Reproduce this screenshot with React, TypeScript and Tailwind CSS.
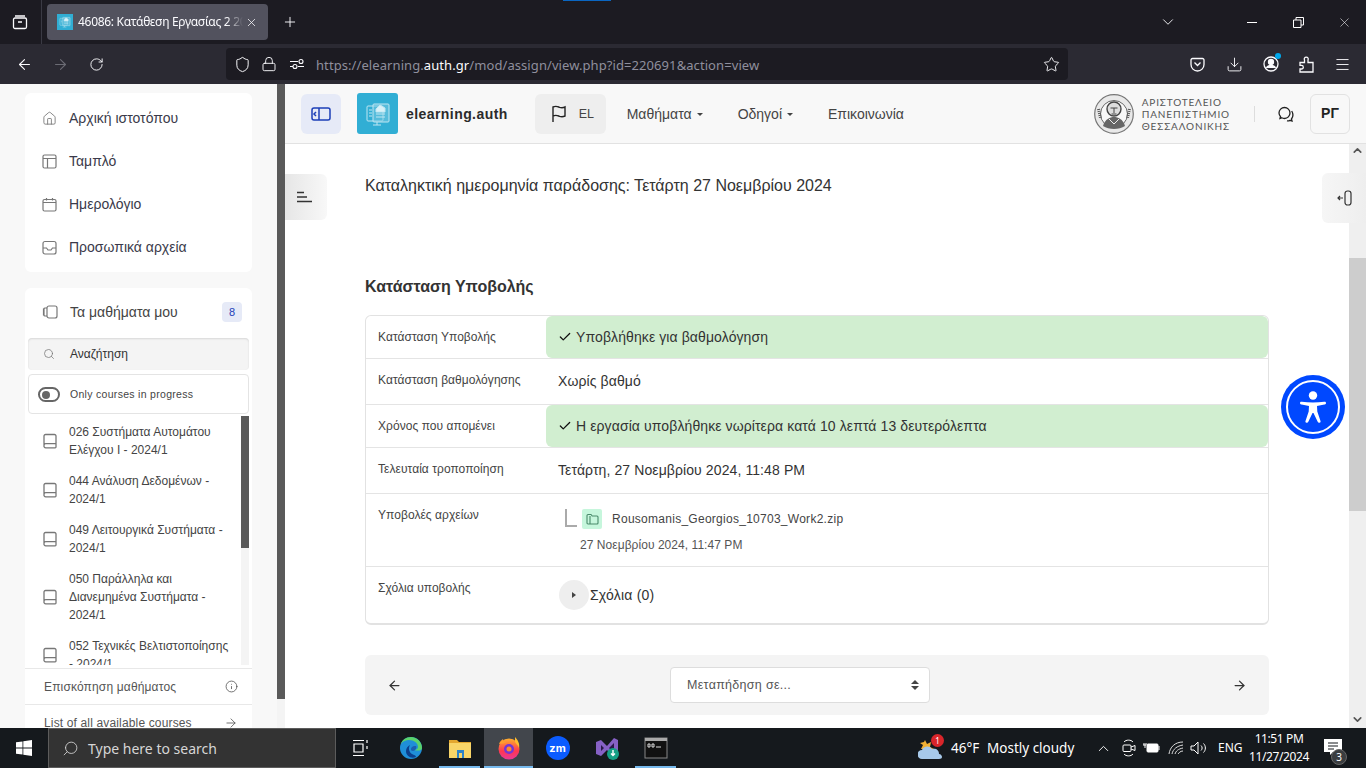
import React from "react";
import {
  ArrowLeft, ArrowRight, Check, ChevronDown, ChevronUp, Download, House, Info, Lock, Menu, Plus, RotateCw, Search, Shield, Star, X,
} from "lucide-react";

const sans = "font-['Liberation_Sans',Arial,sans-serif]";
const ui = "font-['Noto_Sans','Open_Sans',sans-serif]";

function LogoGlyph({ size = 26 }: { size?: number }) {
  return (
    <svg width={size} height={size} viewBox="0 0 26 26" fill="none" stroke="#bfe6f2" strokeWidth="1">
      <rect x="2" y="5" width="16" height="15" rx="1" />
      <rect x="8" y="3" width="16" height="18" rx="1" fill="#7cc9e2" fillOpacity=".5" />
      <path d="M11 8l4-4 5 3v4h-9z" fill="#d8f1f8" />
      <path d="M11 13h9M11 16h9M4 9h3M4 12h3M4 15h3M12 21v3M8 24h8" />
    </svg>
  );
}

function SidebarRow({ icon, label }: { icon: React.ReactNode; label: string }) {
  return (
    <div className="flex h-[43px] items-center pl-[17px] text-[14px] text-[#3a3a4a]">
      <span className="flex w-[27px] justify-start text-[#777]">{icon}</span>
      {label}
    </div>
  );
}

function BookIcon() {
  return (
    <svg width="16" height="16" viewBox="0 0 16 16" fill="none" stroke="#777" strokeWidth="1.3" className="shrink-0">
      <path d="M2 12.5V3a1.5 1.5 0 0 1 1.5-1.5h9A1.5 1.5 0 0 1 14 3v11a.8.8 0 0 1-.8.8H3.8A1.8 1.8 0 0 1 2 12.5a1.8 1.8 0 0 1 1.8-1.8H14" />
    </svg>
  );
}

function Course({ lines }: { lines: string[] }) {
  return (
    <div className="flex items-center py-[6.5px] pl-[14px]">
      <span className="w-[27px]"><BookIcon /></span>
      <div className="text-[12px] leading-[18px] text-[#444] whitespace-nowrap">
        {lines.map((l) => <div key={l}>{l}</div>)}
      </div>
    </div>
  );
}

function Sidebar() {
  return (
    <div className={`relative flex h-full w-[285px] shrink-0 bg-[#f8f8f8] ${sans}`}>
      <div className="w-[277px] pl-[25px] pt-[9px]">
        <div className="w-[227px] rounded-[6px] bg-white pt-[4px] pb-[3px]">
          <SidebarRow label="Αρχική ιστοτόπου" icon={<House size={15} strokeWidth={1.4} />} />
          <SidebarRow label="Ταμπλό" icon={
            <svg width="15" height="15" viewBox="0 0 15 15" fill="none" stroke="#777" strokeWidth="1.2"><rect x="1" y="1" width="13" height="13" rx="1.5" /><path d="M1 4.5h13M5.5 4.5V14" /></svg>
          } />
          <SidebarRow label="Ημερολόγιο" icon={
            <svg width="15" height="15" viewBox="0 0 15 15" fill="none" stroke="#777" strokeWidth="1.2"><rect x="1" y="2.5" width="13" height="11.5" rx="1.5" /><path d="M1 5.5h13M4.5 1v2.5M10.5 1v2.5" /></svg>
          } />
          <SidebarRow label="Προσωπικά αρχεία" icon={
            <svg width="15" height="15" viewBox="0 0 15 15" fill="none" stroke="#777" strokeWidth="1.2"><rect x="1" y="1.5" width="13" height="12.5" rx="2" /><path d="M1 8h3.5l1.5 2h3l1.5-2H14" /></svg>
          } />
        </div>
        <div className="mt-[16px] h-[440px] w-[227px] overflow-hidden rounded-t-[6px] bg-white">
          <div className="flex h-[50px] items-center pb-[2px] pl-[17px] pr-[10px]">
            <svg width="16" height="14" viewBox="0 0 16 14" fill="none" stroke="#777" strokeWidth="1.2" className="mr-[12px]"><rect x="5" y="1" width="10" height="12" rx="2" /><path d="M5 3H3a1 1 0 0 0-1 1v6a1 1 0 0 0 1 1h2M2 4H1.500v6H2" /></svg>
            <span className="text-[14px] text-[#444]">Τα μαθήματα μου</span>
            <span className="ml-auto flex h-[20px] w-[20px] items-center justify-center rounded-[4px] bg-[#e6eaf7] text-[11px] text-[#1d3fb8]">8</span>
          </div>
          <div className="ml-[3px] flex h-[32px] w-[221px] items-center rounded-[4px] bg-[#f4f4f4] pl-[15px] text-[12px] text-[#333] shadow-[inset_0_1px_2px_rgba(0,0,0,0.12)]">
            <Search size={12} strokeWidth={1.5} color="#777" className="mr-[15px]" />
            Αναζήτηση
          </div>
          <div className="ml-[3px] mt-[4px] flex h-[40px] w-[221px] items-center rounded-[4px] border border-[#e4e4e4] pl-[9px] pt-[1px] text-[10.500px] tracking-[0.3px] text-[#444]">
            <span className="mr-[10px] flex h-[15px] w-[22px] items-center rounded-full border-2 border-[#666] pl-[2px]">
              <span className="h-[8px] w-[8px] rounded-full bg-[#666]" />
            </span>
            Only courses in progress
          </div>
          <div className="relative ml-[3px] mt-[2px] h-[249px] w-[221px] overflow-hidden">
            <Course lines={["026 Συστήματα Αυτομάτου", "Ελέγχου Ι - 2024/1"]} />
            <Course lines={["044 Ανάλυση Δεδομένων -", "2024/1"]} />
            <Course lines={["049 Λειτουργικά Συστήματα -", "2024/1"]} />
            <Course lines={["050 Παράλληλα και", "Διανεμημένα Συστήματα -", "2024/1"]} />
            <Course lines={["052 Τεχνικές Βελτιστοποίησης", "- 2024/1"]} />
            <div className="absolute right-0 top-0 h-full w-[8px] bg-[#f4f4f4]">
              <div className="h-[132px] w-full bg-[#5a5a5a]" />
            </div>
          </div>
          <div className="mt-[3px] flex h-[36px] items-center justify-between border-t border-[#e8e8e8] pl-[19px] pr-[14px] text-[12px] tracking-[0.15px] text-[#555]">
            Επισκόπηση μαθήματος
            <Info size={13} strokeWidth={1.5} />
          </div>
          <div className="flex h-[36px] items-center justify-between border-t border-[#e8e8e8] pl-[19px] pr-[14px] text-[12px] tracking-[0.15px] text-[#555]">
            List of all available courses
            <ArrowRight size={14} strokeWidth={1.4} />
          </div>
        </div>
      </div>
      <div className="w-[8px] bg-[#f4f4f4]">
        <div className="h-[615px] w-full bg-[#5a5a5a]" />
      </div>
    </div>
  );
}

function NavLink({ label, caret }: { label: string; caret?: boolean }) {
  return (
    <span className="flex items-center pt-[2px] text-[14px] text-[#444]">
      {label}
      {caret && <span className="ml-[5px] h-0 w-0 border-x-[3px] border-t-[3px] border-x-transparent border-t-[#444]" />}
    </span>
  );
}

function UniSeal() {
  return (
    <svg width="40" height="40" viewBox="0 0 40 40" fill="none">
      <circle cx="20" cy="20" r="19.300" stroke="#777" strokeWidth="1.200" fill="#e9e9e9" />
      <circle cx="20" cy="20" r="13.500" stroke="#666" strokeWidth="1" fill="#f8f8f8" />
      <circle cx="20" cy="15" r="7" stroke="#444" strokeWidth="1.400" fill="#ddd" />
      <path d="M16.500 14h7M20 14v5M17.500 20h5" stroke="#444" strokeWidth="1" />
      <path d="M9 32c2-7 7-9 11-9s9 2 11 9c-6 4-16 4-22 0z" fill="#666" />
      <path d="M15 25l5 5 5-5" stroke="#eee" strokeWidth="1" />
      <path d="M4.500 15l2 9M35.500 15l-2 9" stroke="#555" strokeWidth="3" strokeDasharray="1 1" />
    </svg>
  );
}

function Header() {
  return (
    <div className={`flex h-[60px] shrink-0 items-center border-b border-[#e2e2e2] bg-[#f8f8f8] pl-[16px] pr-[16px] ${sans}`}>
      <span className="flex h-[40px] w-[40px] items-center justify-center rounded-[6px] bg-[#e6eaf7]">
        <svg width="20" height="14" viewBox="0 0 20 14" fill="none" stroke="#1d3fb8" strokeWidth="1.500"><rect x="1" y="1" width="18" height="12" rx="2" /><path d="M8 1v12M5 5L3 7l2 2" /></svg>
      </span>
      <span className="ml-[16px] flex h-[41px] w-[41px] items-center justify-center rounded-[3px] bg-[#31aed4]"><LogoGlyph /></span>
      <span className="ml-[8px] pt-[2px] text-[14px] font-bold tracking-[0.43px] text-[#2b2b2b]">elearning.auth</span>
      <span className="ml-[27px] flex h-[40px] w-[71px] items-center rounded-[6px] bg-[#eeeeee] pl-[16px] text-[12.500px] text-[#444]">
        <svg width="16" height="18" viewBox="0 0 16 18" fill="none" stroke="#222" strokeWidth="1.400"><path d="M2 17V2c3-1.500 4.500-.5 6.500.3 2 .7 3.500.7 5.500-.3v9c-2 1-3.500 1-5.500.3C6.500 10.500 5 9.500 2 11" /></svg>
        <span className="ml-[12px] pt-[2px]">EL</span>
      </span>
      <span className="ml-[21px]"><NavLink label="Μαθήματα" caret /></span>
      <span className="ml-[35px]"><NavLink label="Οδηγοί" caret /></span>
      <span className="ml-[35px]"><NavLink label="Επικοινωνία" /></span>
      <span className="ml-auto"><UniSeal /></span>
      <span className="ml-[8px] font-['Lato',sans-serif] text-[10px] leading-[12px] tracking-[0.85px] text-[#555] whitespace-nowrap">
        <div>ΑΡΙΣΤΟΤΕΛΕΙΟ</div>
        <div>ΠΑΝΕΠΙΣΤΗΜΙΟ</div>
        <div>ΘΕΣΣΑΛΟΝΙΚΗΣ</div>
      </span>
      <span className="ml-[24px] h-[16px] w-px bg-[#ddd]" />
      <span className="ml-[22px]">
        <svg width="18" height="18" viewBox="0 0 18 18" fill="none" stroke="#222" strokeWidth="1.300">
          <path d="M2 8a5.500 5.500 0 1 1 5.500 5.500c-1 0-2-.2-2.800-.7L3 13.500l.5-2A5.500 5.500 0 0 1 2 8z" />
          <path d="M14.700 6c1.500 2.500 1.300 6-.2 8l.5 2-2-.7c-1 .5-2 .7-3 .5" />
        </svg>
      </span>
      <span className="ml-[15px] flex h-[40px] w-[40px] items-center justify-center rounded-[6px] border border-[#e2e2e2] text-[14px] font-bold text-[#222]">ΡΓ</span>
    </div>
  );
}

function Row({ label, h, children, green, last }: { label: string; h: number; children: React.ReactNode; green?: boolean; last?: boolean }) {
  return (
    <div style={{ height: h }} className={`flex ${last ? "" : "border-b border-[#e4e4e4]"}`}>
      <div className="w-[180px] shrink-0 pl-[12px] pt-[13px] text-[12px] leading-[16px] tracking-[0.05px] text-[#444]">{label}</div>
      <div className={`flex-1 text-[14px] tracking-[0.1px] text-[#333] ${green ? "flex items-center gap-[4px] rounded-[6px] bg-[#d1eed0] pl-[12px] text-[#222]" : "pl-[12px]"}`}>
        {children}
      </div>
    </div>
  );
}

function Content() {
  return (
    <div className={`relative min-h-0 flex-1 overflow-hidden bg-white ${sans}`}>
      <div className="w-[984px] pl-[80px] pt-[32px]">
        <div className="text-[16px] leading-[20px] text-[#333]">Καταληκτική ημερομηνία παράδοσης: Τετάρτη 27 Νοεμβρίου 2024</div>
        <div className="mt-[79px] text-[16px] font-bold leading-[24px] text-[#333]">Κατάσταση Υποβολής</div>
        <div className="mt-[16px] w-[904px] overflow-hidden rounded-[6px] border border-b-2 border-[#e2e2e2]">
          <Row label="Κατάσταση Υποβολής" h={43} green><Check size={14} strokeWidth={2.200} color="#111" />Υποβλήθηκε για βαθμολόγηση</Row>
          <Row label="Κατάσταση βαθμολόγησης" h={46}><div className="pt-[14px] leading-[16px]">Χωρίς βαθμό</div></Row>
          <Row label="Χρόνος που απομένει" h={43} green><Check size={14} strokeWidth={2.200} color="#111" />Η εργασία υποβλήθηκε νωρίτερα κατά 10 λεπτά 13 δευτερόλεπτα</Row>
          <Row label="Τελευταία τροποποίηση" h={46}><div className="pt-[14px] leading-[16px]">Τετάρτη, 27 Νοεμβρίου 2024, 11:48 PM</div></Row>
          <Row label="Υποβολές αρχείων" h={73}>
            <div className="flex items-start pt-[15px]">
              <span className="ml-[7px] mr-[5px] h-[18px] w-[12px] border-b-2 border-l-2 border-[#aaa]" />
              <span className="flex h-[20px] w-[20px] items-center justify-center rounded-[2px] bg-[#c6f6dc]">
                <svg width="13" height="12" viewBox="0 0 13 12" fill="none" stroke="#4a8a6b" strokeWidth="1.100"><path d="M1 2.500A1 1 0 0 1 2 1.500h3l1.200 1.500H11a1 1 0 0 1 1 1V10a1 1 0 0 1-1 1H2a1 1 0 0 1-1-1zM4 3v8" /></svg>
              </span>
              <span className="ml-[10px] text-[12px] leading-[20px] tracking-[0.27px] text-[#444]">Rousomanis_Georgios_10703_Work2.zip</span>
            </div>
            <div className="ml-[22px] mt-[8px] text-[12px] leading-[16px] tracking-[0.05px] text-[#555]">27 Νοεμβρίου 2024, 11:47 PM</div>
          </Row>
          <Row label="Σχόλια υποβολής" h={56} last>
            <div className="flex h-full items-center text-[#333]">
              <span className="ml-[1px] flex h-[30px] w-[30px] items-center justify-center rounded-full bg-[#eeeeee]">
                <span className="h-0 w-0 border-y-[3.500px] border-l-[4px] border-y-transparent border-l-[#444]" />
              </span>
              <span className="ml-[1px] tracking-[0.2px]">Σχόλια (0)</span>
            </div>
          </Row>
        </div>
        <div className="mt-[30px] flex h-[60px] w-[904px] items-center rounded-[6px] bg-[#f4f4f4] pl-[22px] pr-[22px]">
          <ArrowLeft size={15} strokeWidth={2} color="#333" />
          <div className="ml-[268px] flex h-[36px] w-[260px] items-center justify-between rounded-[4px] border border-[#ddd] bg-white pl-[16px] pr-[10px] text-[12.500px] tracking-[0.3px] text-[#555]">
            Μεταπήδηση σε...
            <span className="flex flex-col gap-[2px]">
              <span className="h-0 w-0 border-x-[4px] border-b-[4px] border-x-transparent border-b-[#444]" />
              <span className="h-0 w-0 border-x-[4px] border-t-[4px] border-x-transparent border-t-[#444]" />
            </span>
          </div>
          <ArrowRight size={15} strokeWidth={2} color="#333" className="ml-auto" />
        </div>
      </div>
      <div className="absolute left-0 top-[30px] flex h-[46px] w-[42px] items-center rounded-r-[6px] bg-gradient-to-r from-[#e6e6e6] to-[#f8f8f8] pl-[12px]">
        <svg width="15" height="12" viewBox="0 0 15 12" stroke="#333" strokeWidth="1.300"><path d="M0 1.500h7M0 6h10M0 10.500h15" /></svg>
      </div>
      <div className="absolute right-0 top-0 flex h-full w-[17px] flex-col items-center bg-[#efefef]">
        <ChevronUp size={13} strokeWidth={3} color="#555" />
        <div className="absolute top-[114px] h-[253px] w-full bg-[#cdcdcd]" />
        <ChevronDown size={13} strokeWidth={3} color="#555" className="absolute bottom-[2px]" />
      </div>
      <div className="absolute right-0 top-[29px] flex h-[50px] w-[44px] items-center rounded-l-[6px] bg-gradient-to-r from-[#f6f6f6] to-[#eeeeee] pl-[15px]">
        <svg width="15" height="16" viewBox="0 0 15 16" fill="none" stroke="#333" strokeWidth="1.200"><rect x="8" y="1" width="6" height="14" rx="2.500" /><path d="M6 8H1M3 6L1 8l2 2" /></svg>
      </div>
      <div className="absolute left-[996px] top-[231px] flex h-[64px] w-[64px] items-center justify-center rounded-full bg-[#0048ff]">
        <div className="flex h-[54px] w-[54px] items-center justify-center rounded-full border-2 border-white">
          <svg width="26" height="32" viewBox="2 0 26 32" fill="white">
            <circle cx="15" cy="4.500" r="4.200" />
            <path d="M2 12c0-1 .8-1.500 1.800-1.300 7 1 15.400 1 22.400 0 1-.2 1.800.3 1.800 1.300s-.7 1.400-1.600 1.600L19 15l.3 5.500L22.500 30c.3 1-.2 1.600-1 1.800-.8.200-1.500-.2-1.800-1L15.500 22h-1l-4.200 8.800c-.3.800-1 1.200-1.800 1-.8-.2-1.300-.8-1-1.800l3.200-9.500L11 15l-7.400-1.400C2.700 13.400 2 13 2 12z" />
          </svg>
        </div>
      </div>
    </div>
  );
}

function Browser() {
  return (
    <div className={`relative shrink-0 ${ui}`}>
      <div className="absolute left-[563px] top-0 h-px w-[48px] bg-[#0a66c2]" />
      <div className="flex h-[44px] items-center bg-[#1c1b22] text-[#fbfbfe]">
        <span className="flex w-[43px] items-center pl-[12px]">
          <svg width="16" height="16" viewBox="0 0 16 16" fill="none" stroke="#fbfbfe" strokeWidth="1.300"><path d="M3 2h10M1.500 5.500A1.500 1.500 0 0 1 3 4h10a1.500 1.500 0 0 1 1.500 1.500V13a1.500 1.500 0 0 1-1.500 1.500H3A1.500 1.500 0 0 1 1.500 13zM6 8h4" /></svg>
        </span>
        <span className="h-[44px] w-px -translate-x-[2px] bg-[#3a3a44]" />
        <span className="ml-[3px] flex h-[36px] w-[221px] items-center rounded-[4px] bg-[#52525e] pl-[10px]">
          <span className="flex h-[16px] w-[16px] items-center justify-center bg-[#31aed4]"><LogoGlyph size={12} /></span>
          <span className="ml-[5px] w-[165px] overflow-hidden whitespace-nowrap text-[12px] tracking-[-0.3px] [mask-image:linear-gradient(to_right,black_90%,transparent)]">46086: Κατάθεση Εργασίας 2 2024</span>
          <X size={13} strokeWidth={1.400} className="ml-[2px]" />
        </span>
        <Plus size={16} strokeWidth={1.400} className="ml-[14px]" />
        <ChevronDown size={18} strokeWidth={1.200} className="ml-[861px]" />
        <svg width="10" height="1" className="ml-[70px]"><rect width="10" height="1" fill="#fff" /></svg>
        <svg width="11" height="11" viewBox="0 0 11 11" fill="none" stroke="#fff" className="ml-[36px]"><path d="M.5 3h7.500v7.500H.5zM3 3V.5h7.500V8H8" /></svg>
        <X size={15} strokeWidth={.900} className="ml-[33px]" />
      </div>
      <div className="flex h-[40px] items-center bg-[#2b2a33] text-[#fbfbfe]">
        <ArrowLeft size={17} strokeWidth={1.500} className="ml-[16px]" />
        <ArrowRight size={17} strokeWidth={1.500} color="#6b6b74" className="ml-[19px]" />
        <RotateCw size={15} strokeWidth={1.500} className="ml-[20px]" />
        <div className="ml-[122px] flex h-[32px] w-[842px] items-center rounded-[4px] bg-[#1c1b22] pl-[8px] pr-[8px]">
          <Shield size={17} strokeWidth={1.400} />
          <Lock size={16} strokeWidth={1.400} className="ml-[10px]" />
          <svg width="14" height="12" viewBox="0 0 14 12" fill="none" stroke="#fbfbfe" strokeWidth="1.100" className="ml-[13px]"><path d="M0 3.500h8M0 8.500h3M8 8.500h6" /><circle cx="11" cy="3.500" r="2" /><circle cx="5" cy="8.500" r="2" /></svg>
          <span className="ml-[12px] whitespace-nowrap pt-[4px] text-[13px] tracking-[0.08px] text-[#8f8f9d]">
            https://elearning.<span className="text-[#fbfbfe]">auth.gr</span>/mod/assign/view.php?id=220691&amp;action=view
          </span>
          <Star size={17} strokeWidth={1.300} className="ml-auto" />
        </div>
        <svg width="15" height="15" viewBox="0 0 15 15" fill="none" stroke="#fbfbfe" strokeWidth="1.300" className="ml-[122px]"><path d="M1 3a1.500 1.500 0 0 1 1.500-1.500h10A1.500 1.500 0 0 1 14 3v4.500a6.500 6.500 0 0 1-13 0z" /><path d="M4.500 5.500l3 3 3-3" /></svg>
        <Download size={17} strokeWidth={1.300} className="ml-[21px]" />
        <span className="relative ml-[20px]">
          <svg width="16" height="16" viewBox="0 0 16 16" fill="none" stroke="#fbfbfe" strokeWidth="1.300"><circle cx="8" cy="8" r="7" /><circle cx="8" cy="6" r="2.500" fill="#fbfbfe" /><path d="M3.500 12c1-2 2.500-2.500 4.500-2.500s3.500.5 4.500 2.500" fill="#fbfbfe" /></svg>
          <span className="absolute -right-[2px] -top-[3px] h-[6px] w-[6px] rounded-full bg-[#00a8ec]" />
        </span>
        <svg width="15" height="17" viewBox="0 0 15 17" fill="none" stroke="#fbfbfe" strokeWidth="1.300" className="ml-[20px]"><path d="M1 6.500h4.500V4a2 2 0 1 1 3.500 0v2.500h5v9.500H1v-3h1.500a1.800 1.800 0 0 0 0-3.600H1z" /></svg>
        <Menu size={17} strokeWidth={1.300} className="ml-[20px]" />
      </div>
    </div>
  );
}

function TaskIcon({ children, active, line }: { children: React.ReactNode; active?: boolean; line?: boolean }) {
  return (
    <span className={`relative flex h-[40px] w-[49px] shrink-0 items-center justify-center ${active ? "bg-[#42464c]" : ""}`}>
      {children}
      {(active || line) && <span className={`absolute bottom-0 h-[2px] bg-[#76b9ed] ${active ? "inset-x-0" : "inset-x-[4px]"}`} />}
    </span>
  );
}

function Taskbar() {
  return (
    <div className={`flex h-[40px] shrink-0 items-center whitespace-nowrap bg-[#15191d] text-white ${ui}`}>
      <span className="flex w-[48px] shrink-0 justify-center">
        <svg width="16" height="16" viewBox="0 0 16 16" fill="white"><path d="M0 2.300l6.500-.9V7.600H0zM7.300 1.300L16 0v7.600H7.300zM0 8.400h6.500v6.200L0 13.700zM7.300 8.400H16V16l-8.700-1.300z" /></svg>
      </span>
      <div className="flex h-[40px] w-[288px] shrink-0 items-center border border-[#5c5c5c] bg-[#333333] pl-[13px] text-[14px] text-[#d6d6d6]">
        <Search size={17} strokeWidth={1.200} className="-scale-x-100" />
        <span className="ml-[9px]">Type here to search</span>
      </div>
      <span className="flex w-[50px] shrink-0 justify-center">
        <svg width="16" height="18" viewBox="0 0 16 18" fill="none" stroke="white" strokeWidth="1.200"><path d="M0 1.500h11M0 16.500h11M1 5h9v8H1zM14 1v3M14 7v3" /></svg>
      </span>
      <TaskIcon>
        <svg width="24" height="24" viewBox="0 0 24 24"><circle cx="12" cy="12" r="11" fill="#1f8fd8" /><path d="M23 12c0-6-5-11-11-11C7 1 3 4 2 8c2-3 5-4 8-4 5 0 9 3 9 7 0 2-2 3-4 3 0 0 8 2 8-2z" fill="#5ad36c" /><path d="M12 13c0-2 2-3.500 5-3 1 2-1 5-3 5s-2-1-2-2z" fill="#1a5fb0" /><path d="M17 21c-5 2-10-1-10-6 0-3 2-5 4-6-2 3-1 7 2 9 2 1 4 1.500 4 3z" fill="#0c3f8c" /></svg>
      </TaskIcon>
      <TaskIcon line>
        <svg width="22" height="20" viewBox="0 0 22 20"><path d="M0 2h8l2 2h12v2H0z" fill="#e3a72f" /><rect y="5" width="22" height="15" fill="#f8d568" /><rect x="8" y="12" width="7" height="8" fill="#2d83c8" /><rect x="10" y="15" width="3" height="5" fill="#f8d568" /></svg>
      </TaskIcon>
      <TaskIcon active>
        <svg width="24" height="24" viewBox="0 0 24 24"><circle cx="12" cy="13" r="10.500" fill="url(#ff)" /><path d="M18 1c3 3 5 7 4 11-1-3-3-4-4-6 0-2 0-3 0-5z" fill="#ffbd2e" /><path d="M2 8c1-3 3-4 4-5 0 2 2 3 4 3-2 1-5 2-8 2z" fill="#ff9d2e" /><circle cx="12" cy="13" r="5" fill="#7436d6" /><circle cx="12" cy="13" r="2.500" fill="#ff8a2b" /><defs><linearGradient id="ff" x1="0" y1="0" x2="0" y2="1"><stop offset="0" stopColor="#ffb02e" /><stop offset=".6" stopColor="#ff3750" /><stop offset="1" stopColor="#e8389b" /></linearGradient></defs></svg>
      </TaskIcon>
      <TaskIcon>
        <span className="flex h-[24px] w-[24px] items-center justify-center rounded-full bg-[#0b5cff] font-['Inter',sans-serif] text-[11px] font-bold">zm</span>
      </TaskIcon>
      <TaskIcon>
        <svg width="24" height="24" viewBox="0 0 24 24"><path d="M1 6l5-2 6 6 7-8 4 2v16l-4 2-7-8-6 6-5-2z" fill="#8661c5" /><path d="M6 9v6l3-3zM19 7l-5 5 5 5z" fill="#2a1a4a" /><circle cx="18" cy="18" r="6" fill="#15a085" /><path d="M18 14v5M16 17.500l2 2 2-2" stroke="#fff" strokeWidth="1.400" fill="none" /></svg>
      </TaskIcon>
      <TaskIcon line>
        <svg width="24" height="24" viewBox="0 0 24 24"><rect x="1" y="2" width="22" height="20" fill="#111" stroke="#888" /><rect x="1" y="2" width="22" height="3" fill="#aaa" /><path d="M4 8h2v3H4zM8 8h2v3H8zM12 11h5" stroke="#ddd" strokeWidth="1" fill="none" /></svg>
      </TaskIcon>
      <span className="relative ml-[238px] h-[28px] w-[32px] shrink-0">
        <svg width="28" height="24" viewBox="0 0 28 24" className="absolute left-0 top-[3px]"><path d="M7 3l2 4 4-2-1 5 4 2H3l2-4-3-2 4-1z" fill="#f2b134" /><path d="M4 22a4.500 4.500 0 0 1 0-9c1-4 8-5 10-1 4-1 7 1 7 5 2 0 3 2 3 3s-1 2-3 2z" fill="#a7c9ea" /></svg>
        <span className="absolute left-[13px] top-0 flex h-[13px] w-[13px] items-center justify-center rounded-full bg-[#d9252a] text-[8px] leading-none">1</span>
      </span>
      <span className="ml-[1px] w-[36px] shrink-0 text-[13.500px]">46°F</span>
      <span className="w-[108px] shrink-0 text-[13.500px]">Mostly cloudy</span>
      <ChevronUp size={17} strokeWidth={1.300} className="shrink-0" />
      <svg width="14" height="18" viewBox="0 0 14 18" fill="none" stroke="white" className="ml-[10px] shrink-0"><path d="M2 3c2-2.500 7-2.500 9 0M2 15c2 2.500 7 2.500 9 0" /><rect x="1" y="6" width="8" height="6.500" rx="1" /><path d="M9 8l4-1.500v5L9 10" /></svg>
      <svg width="18" height="12" viewBox="0 0 18 12" fill="none" stroke="white" className="ml-[6px] shrink-0"><path d="M1 3h3M2 1v2M4 1v2M3 3v3" /><rect x="5" y="2" width="11" height="8" rx="1" fill="white" /><path d="M17 4v4" /></svg>
      <svg width="16" height="14" viewBox="0 0 16 14" fill="none" stroke="#ddd" className="ml-[8px] shrink-0"><path d="M1 13C2 6 7 1 15 1M4 13c1-5 5-8 11-9M7 13c1-3 3-5 8-6M10 13c1-1 2-3 5-3" /></svg>
      <svg width="18" height="14" viewBox="0 0 18 14" fill="none" stroke="white" className="ml-[6px] shrink-0"><path d="M1 5v4h3l4 4V1L4 5zM11 4.500c1.500 1.500 1.500 3.500 0 5M13.500 2.500c2.500 2.500 2.500 6.500 0 9" /></svg>
      <span className="ml-[10px] w-[23px] shrink-0 text-[12px]">ENG</span>
      <div className="ml-[2px] w-[72px] shrink-0 text-center text-[12px] leading-[18px] tracking-[-0.4px]">
        <div>11:51 PM</div>
        <div>11/27/2024</div>
      </div>
      <span className="relative ml-[2px] h-[30px] w-[30px] shrink-0">
        <svg width="18" height="17" viewBox="0 0 18 17" className="absolute left-[7px] top-[6px]"><path d="M0 0h18v13H9l-3 3v-3H0z" fill="white" /><path d="M4 4h10M4 7h10M4 10h6" stroke="#15191d" /></svg>
        <span className="absolute left-[14px] top-[16px] flex h-[16px] w-[16px] items-center justify-center rounded-full border border-[#666] bg-[#3a3d40] text-[10px]">3</span>
      </span>
    </div>
  );
}

export default function App() {
  return (
    <div className="flex h-[768px] w-[1366px] flex-col overflow-hidden">
      <Browser />
      <div className="flex min-h-0 flex-1">
        <Sidebar />
        <div className="flex min-w-0 flex-1 flex-col">
          <Header />
          <Content />
        </div>
      </div>
      <Taskbar />
    </div>
  );
}
